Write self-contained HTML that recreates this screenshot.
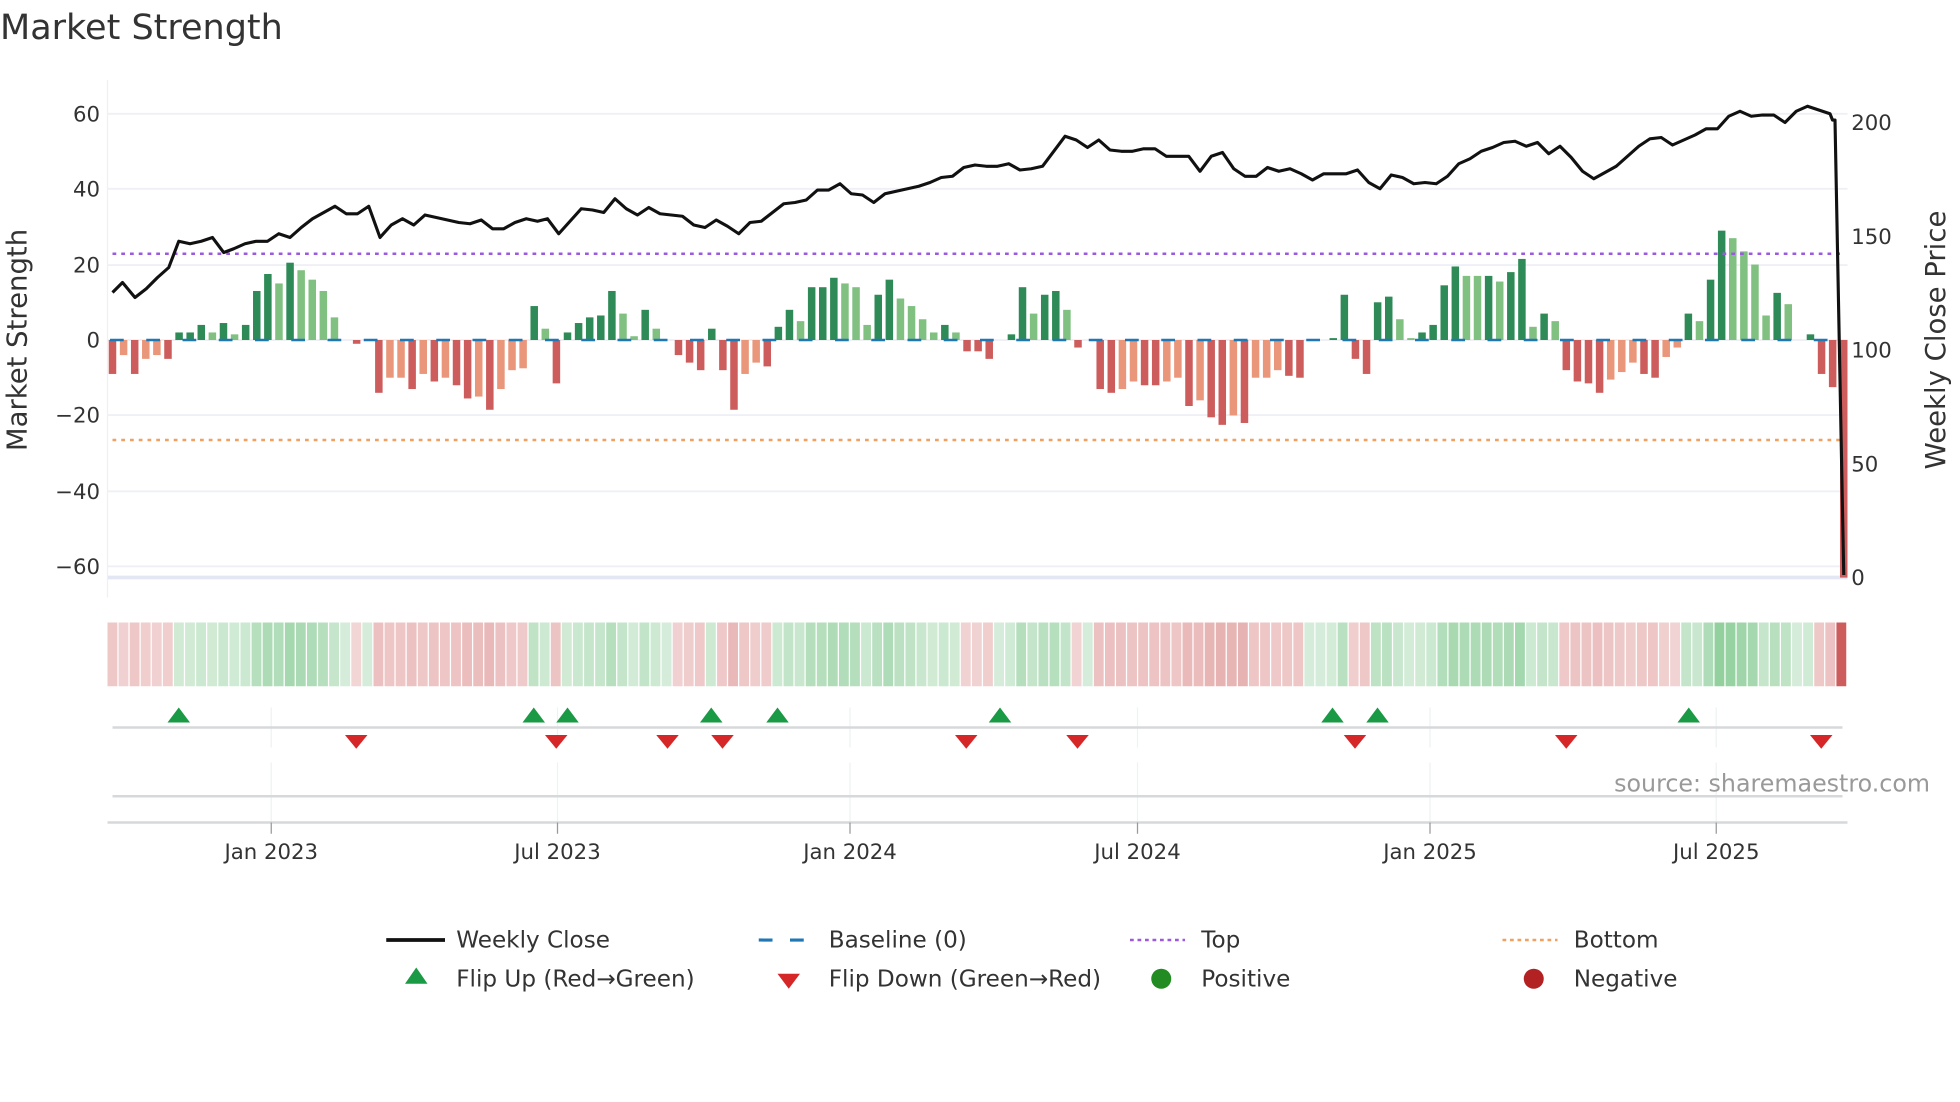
<!DOCTYPE html>
<html><head><meta charset="utf-8"><style>
html,body{margin:0;padding:0;background:#fff;}
svg{display:block;font-family:"DejaVu Sans","Liberation Sans",sans-serif;}
</style></head><body>
<svg id="s" width="1960" height="1102" viewBox="0 0 1568 881.6" xmlns="http://www.w3.org/2000/svg">
<rect width="1568" height="882" fill="#fff"/>
<text x="0" y="31" font-size="28" fill="#333">Market Strength</text>
<g stroke="#eef0f6" stroke-width="1.5">
<line x1="86" x2="1478" y1="91" y2="91"/><line x1="86" x2="1478" y1="151" y2="151"/>
<line x1="86" x2="1478" y1="212" y2="212"/><line x1="86" x2="1478" y1="272" y2="272"/>
<line x1="86" x2="1478" y1="332" y2="332"/><line x1="86" x2="1478" y1="393" y2="393"/>
<line x1="86" x2="1478" y1="453" y2="453"/>
</g>
<line x1="86" x2="1478" y1="462" y2="462" stroke="#e3e6f3" stroke-width="3"/>
<line x1="86" x2="86" y1="64" y2="478" stroke="#eef0f3" stroke-width="1"/>
<g font-size="17" fill="#333" text-anchor="end">
<text x="80" y="97">60</text><text x="80" y="157">40</text><text x="80" y="218">20</text>
<text x="80" y="278">0</text><text x="80" y="338">−20</text><text x="80" y="399">−40</text><text x="80" y="459">−60</text>
</g>
<g font-size="17" fill="#333">
<text x="1481" y="104">200</text><text x="1481" y="195">150</text><text x="1481" y="286">100</text>
<text x="1481" y="377">50</text><text x="1481" y="468">0</text>
</g>
<text transform="translate(21,272) rotate(-90)" font-size="22" fill="#333" text-anchor="middle">Market Strength</text>
<text transform="translate(1556,272) rotate(-90)" font-size="22" fill="#333" text-anchor="middle">Weekly Close Price</text>
<g id="bars"></g>
<line x1="88" x2="1476" y1="272" y2="272" stroke="#1f77b4" stroke-width="2" stroke-dasharray="11,18"/>
<line x1="90" x2="1476" y1="203" y2="203" stroke="#9b59e0" stroke-width="2" stroke-dasharray="3,4"/>
<line x1="90" x2="1476" y1="352" y2="352" stroke="#f0a060" stroke-width="2" stroke-dasharray="3,4"/>
<polyline id="price" fill="none" stroke="#111" stroke-width="2.5" stroke-linejoin="round"/>
<g id="heat"></g>
<g stroke="#eef2f2" stroke-width="1">
<line x1="217" x2="217" y1="566" y2="598"/><line x1="446" x2="446" y1="566" y2="598"/><line x1="680" x2="680" y1="566" y2="598"/>
<line x1="910" x2="910" y1="566" y2="598"/><line x1="1144" x2="1144" y1="566" y2="598"/><line x1="1373" x2="1373" y1="566" y2="598"/>
<line x1="217" x2="217" y1="610" y2="658"/><line x1="446" x2="446" y1="610" y2="658"/><line x1="680" x2="680" y1="610" y2="658"/>
<line x1="910" x2="910" y1="610" y2="658"/><line x1="1144" x2="1144" y1="610" y2="658"/><line x1="1373" x2="1373" y1="610" y2="658"/>
</g>
<line x1="90" x2="1474" y1="582" y2="582" stroke="#d6d9dc" stroke-width="2"/>
<line x1="90" x2="1474" y1="637" y2="637" stroke="#d6d9dc" stroke-width="2"/>
<line x1="86" x2="1478" y1="658" y2="658" stroke="#d6d9dc" stroke-width="2"/>
<g id="marks"></g>
<g stroke="#999" stroke-width="1">
<line x1="217" x2="217" y1="658" y2="667"/><line x1="446" x2="446" y1="658" y2="667"/><line x1="680" x2="680" y1="658" y2="667"/>
<line x1="910" x2="910" y1="658" y2="667"/><line x1="1144" x2="1144" y1="658" y2="667"/><line x1="1373" x2="1373" y1="658" y2="667"/>
</g>
<g font-size="17" fill="#333" text-anchor="middle">
<text x="217" y="687">Jan 2023</text><text x="446" y="687">Jul 2023</text><text x="680" y="687">Jan 2024</text>
<text x="910" y="687">Jul 2024</text><text x="1144" y="687">Jan 2025</text><text x="1373" y="687">Jul 2025</text>
</g>
<text x="1544" y="633" font-size="19" fill="#999" text-anchor="end">source: sharemaestro.com</text>
<g font-size="18.5" fill="#333">
<line x1="309" x2="356" y1="752" y2="752" stroke="#111" stroke-width="3"/>
<text x="365" y="758">Weekly Close</text>
<line x1="607" x2="650" y1="752" y2="752" stroke="#1f77b4" stroke-width="2.5" stroke-dasharray="11,14"/>
<text x="663" y="758">Baseline (0)</text>
<line x1="904" x2="948" y1="752" y2="752" stroke="#9b59e0" stroke-width="2" stroke-dasharray="3,3"/>
<text x="961" y="758">Top</text>
<line x1="1202" x2="1246" y1="752" y2="752" stroke="#f0a060" stroke-width="2" stroke-dasharray="3,3"/>
<text x="1259" y="758">Bottom</text>
<polygon points="333,774 342,787 324,787" fill="#1a9a45"/>
<text x="365" y="789">Flip Up (Red→Green)</text>
<polygon points="622,779 640,779 631,791" fill="#d62728"/>
<text x="663" y="789">Flip Down (Green→Red)</text>
<circle cx="929" cy="783" r="8" fill="#228b22"/>
<text x="961" y="789">Positive</text>
<circle cx="1227" cy="783" r="8" fill="#b22222"/>
<text x="1259" y="789">Negative</text>
</g>
</svg>
<script>
var NS="http://www.w3.org/2000/svg";
function el(t,a,p){var e=document.createElementNS(NS,t);for(var k in a)e.setAttribute(k,a[k]);p.appendChild(e);return e;}
var d="-9d,-4l,-9d,-5l,-4l,-5d,2d,2d,4d,2l,4.5d,1.5l,4d,13d,17.5d,15l,20.5d,18.5l,16l,13l,6l,0l,-1d,0l,-14d,-10l,-10l,-13d,-9l,-11d,-10l,-12d,-15.5d,-15l,-18.5d,-13l,-8l,-7.5l,9d,3l,-11.5d,2d,4.5d,6d,6.5d,13d,7l,1l,8d,3l,0l,-4d,-6d,-8d,3d,-8d,-18.5d,-9l,-6l,-7d,3.5d,8d,5l,14d,14d,16.5d,15l,14l,4l,12d,16d,11l,9l,5.5l,2l,4d,2l,-3d,-3d,-5d,0l,1.5d,14d,7l,12d,13d,8l,-2d,0l,-13d,-14d,-13l,-11l,-12d,-12d,-11l,-10l,-17.5d,-16l,-20.5d,-22.5d,-20l,-22d,-10l,-10l,-8l,-9.5d,-10d,0l,0l,0.5d,12d,-5d,-9d,10d,11.5d,5.5l,0.5l,2d,4d,14.5d,19.5d,17l,17l,17d,15.5l,18d,21.5d,3.5l,7d,5l,-8d,-11d,-11.5d,-14d,-10.5l,-8.5l,-6l,-9d,-10d,-4.5l,-2l,7d,5l,16d,29d,27l,23.5l,20l,6.5l,12.5d,9.5l,0l,1.5d,-9d,-12.5d,-63d".split(",");
var n=d.length,x0=90,step=(1475-90)/(n-1);
var bars=document.getElementById("bars"),heat=document.getElementById("heat");
var cw=(1478-86)/n;
for(var i=0;i<n;i++){
 var v=parseFloat(d[i]),dk=d[i].slice(-1)=="d",x=x0+i*step;
 var c=v>=0?(dk?"#2e8b57":"#80c080"):(dk?"#cd5c5c":"#e9967a");
 var h=Math.abs(v)*3.017;
 if(h>0.3){el("rect",{x:x-3,y:v>=0?272-h:272,width:6,height:h,fill:c},bars);}
 var hc;
 if(v>=0) hc="rgba(60,170,80,"+(0.22+Math.abs(v)/30*0.35)+")";
 else hc="rgba(205,92,92,"+(0.25+Math.abs(v)/25*0.25)+")";
 if(i==n-1) hc="#cd5c5c";
 el("rect",{x:86+i*cw,y:498,width:cw-1,height:51,fill:hc},heat);
}
var p="90,234 98,226 108,238 117,231 126,222 135,214 143,193 152,195 161,193 170,190 179,202 187,199 196,195 205,193 214,193 223,187 232,190 241,182 250,175 259,170 268,165 277,171 286,171 295,165 304,190 313,180 322,175 331,180 340,172 349,174 358,176 367,178 376,179 385,176 394,183 403,183 412,178 421,175 430,177 438,175 447,187 456,177 465,167 474,168 483,170 492,159 501,167 510,172 519,166 528,171 537,172 546,173 555,180 564,182 573,176 582,181 591,187 600,178 609,177 618,170 627,163 636,162 645,160 654,152 663,152 672,147 681,155 690,156 699,162 708,155 717,153 726,151 735,149 744,146 753,142 762,141 771,134 780,132 789,133 798,133 807,131 816,136 825,135 834,133 843,121 852,109 861,112 870,118 879,112 888,120 897,121 906,121 915,119 924,119 933,125 942,125 951,125 960,137 969,125 978,122 987,135 996,141 1005,141 1014,134 1023,137 1032,135 1041,139 1050,144 1059,139 1068,139 1077,139 1086,136 1095,146 1104,151 1113,140 1122,142 1131,147 1140,146 1149,147 1158,141 1167,131 1176,127 1185,121 1194,118 1203,114 1212,113 1221,117 1230,114 1239,123 1248,117 1257,126 1266,137 1275,143 1284,138 1293,133 1302,125 1311,117 1320,111 1329,110 1338,116 1347,112 1356,108 1365,103 1374,103 1383,93 1392,89 1401,93 1410,92 1419,92 1428,98 1437,89 1446,85 1455,88 1464,91 1466,96 1468,96 1475,460";
document.getElementById("price").setAttribute("points",p);
var m=document.getElementById("marks");
[143,427,454,569,622,800,1066,1102,1351].forEach(function(x){el("polygon",{points:x+",566 "+(x+9)+",578 "+(x-9)+",578",fill:"#1a9a45"},m);});
[285,445,534,578,773,862,1084,1253,1457].forEach(function(x){el("polygon",{points:(x-9)+",588 "+(x+9)+",588 "+x+",599",fill:"#d62728"},m);});
</script>
</body></html>
